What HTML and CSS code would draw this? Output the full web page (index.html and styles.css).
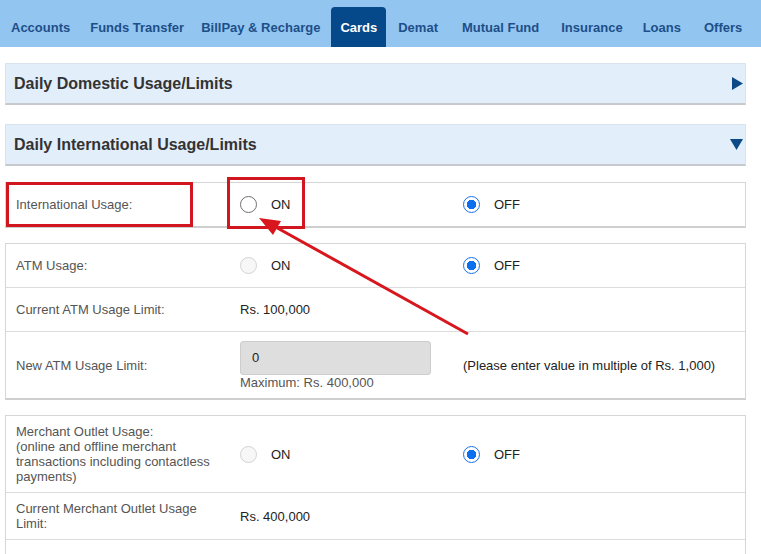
FILE: index.html
```html
<!DOCTYPE html>
<html>
<head>
<meta charset="utf-8">
<link rel="stylesheet" href="styles.css">
</head>
<body>
<nav class="nav">
  <a class="tab">Accounts</a>
  <a class="tab">Funds Transfer</a>
  <a class="tab">BillPay &amp; Recharge</a>
  <a class="tab active">Cards</a>
  <a class="tab">Demat</a>
  <a class="tab">Mutual Fund</a>
  <a class="tab">Insurance</a>
  <a class="tab">Loans</a>
  <a class="tab">Offers</a>
</nav>
<main class="content">
  <div class="panel">
    <span class="panel-title">Daily Domestic Usage/Limits</span>
    <svg class="caret" width="11" height="13" viewBox="0 0 11 13"><polygon points="0,0 11,6.5 0,13" fill="#0b4a86"/></svg>
  </div>
  <div class="panel">
    <span class="panel-title">Daily International Usage/Limits</span>
    <svg class="caret" width="13" height="11" viewBox="0 0 13 11"><polygon points="0,0 13,0 6.5,11" fill="#0b4a86"/></svg>
  </div>

  <div class="box">
    <div class="row">
      <div class="label">International Usage:</div>
      <div class="opt"><span class="radio"></span>ON</div>
      <div class="opt"><span class="radio checked"></span>OFF</div>
    </div>
  </div>

  <div class="box">
    <div class="row">
      <div class="label">ATM Usage:</div>
      <div class="opt"><span class="radio disabled"></span>ON</div>
      <div class="opt"><span class="radio checked"></span>OFF</div>
    </div>
    <div class="row">
      <div class="label">Current ATM Usage Limit:</div>
      <div class="value">Rs. 100,000</div>
      <div></div>
    </div>
    <div class="row tall">
      <div class="label">New ATM Usage Limit:</div>
      <div class="field">
        <div class="input">0</div>
        <div class="max">Maximum: Rs. 400,000</div>
      </div>
      <div class="hint">(Please enter value in multiple of Rs. 1,000)</div>
    </div>
  </div>

  <div class="box">
    <div class="row merchant">
      <div class="label">Merchant Outlet Usage:<br>(online and offline merchant transactions including contactless payments)</div>
      <div class="opt"><span class="radio disabled"></span>ON</div>
      <div class="opt"><span class="radio checked"></span>OFF</div>
    </div>
    <div class="row two">
      <div class="label">Current Merchant Outlet Usage Limit:</div>
      <div class="value">Rs. 400,000</div>
      <div></div>
    </div>
    <div class="row tall">
      <div class="label"></div>
      <div class="field">
        <div class="input"></div>
      </div>
      <div></div>
    </div>
  </div>
</main>

<div class="mark mark-label"></div>
<div class="mark mark-on"></div>
<svg class="arrow" width="761" height="554" viewBox="0 0 761 554">
  <line x1="468" y1="334" x2="272" y2="225" stroke="#d8161e" stroke-width="3"/>
  <polygon points="259,218 281,221 273,235" fill="#d8161e"/>
</svg>
</body>
</html>
```

FILE: styles.css
```css
* { box-sizing: border-box; }
html, body { margin: 0; padding: 0; background: #fff; }
body {
  font-family: "Liberation Sans", Arial, sans-serif;
  font-size: 13px;
  color: #222;
  width: 761px;
  height: 554px;
  overflow: hidden;
  position: relative;
}
.nav {
  display: flex;
  align-items: flex-end;
  height: 47px;
  background: #93c5f1;
  padding-left: 1px;
}
.tab {
  display: block;
  height: 40px;
  line-height: 41px;
  padding: 0 10px;
  font-weight: bold;
  font-size: 13px;
  color: #1d4f88;
  white-space: nowrap;
}
.tab:nth-child(2) { padding-right: 7px; }
.tab:nth-child(3) { padding-right: 11px; }
.tab:nth-child(5) { padding-left: 12px; padding-right: 14px; }
.tab:nth-child(6) { padding-right: 12px; }
.tab:nth-child(8) { padding-right: 13px; }
.tab.active {
  background: #05498a;
  color: #fff;
  border-radius: 4px 4px 0 0;
  padding: 0 9px;
}
.content {
  margin-left: 5px;
  width: 741px;
  padding-top: 16px;
}
.panel {
  display: flex;
  align-items: center;
  justify-content: space-between;
  height: 42px;
  background: #e2eefa;
  border: 1px solid #d9e3ed;
  border-bottom: 2px solid #c6cace;
  padding: 0 2px 0 8px;
  margin-bottom: 19px;
}
.panel + .panel { margin-bottom: 16px; }
.panel-title {
  font-weight: bold;
  font-size: 16px;
  color: #333;
}
.box {
  border: 1px solid #d6d6d6;
  border-bottom: 2px solid #cfcfcf;
  margin-bottom: 15px;
}
.row {
  display: grid;
  grid-template-columns: 224px 223px 1fr;
  align-items: center;
  min-height: 44px;
  padding-left: 10px;
  border-top: 1px solid #dcdcdc;
}
.row:first-child { border-top: none; min-height: 43px; }
.label {
  color: #555;
  padding-right: 10px;
  line-height: 15px;
}
.opt {
  display: flex;
  align-items: center;
  color: #222;
}
.value { color: #222; }
.radio {
  width: 17px;
  height: 17px;
  border-radius: 50%;
  border: 1.5px solid #6f6f6f;
  background: #fff;
  margin-right: 14px;
  flex: none;
}
.radio.disabled {
  border-color: #d3d3d3;
  background: #f7f7f7;
}
.radio.checked {
  border: 1.5px solid #1a73e8;
  background: radial-gradient(circle, #0b6ff0 0 4.5px, #fff 5px);
}
.row.tall { min-height: 66px; }
.field { padding: 9px 0 8px; }
.input {
  width: 191px;
  height: 34px;
  background: #dedede;
  border: 1px solid #cdcdcd;
  border-radius: 3px;
  line-height: 32px;
  padding-left: 11px;
}
.max {
  color: #555;
  line-height: 15px;
}
.hint { color: #222; }
.row.merchant { min-height: 76px; padding-top: 8px; padding-bottom: 8px; }
.row.two { min-height: 47px; }

.mark {
  position: absolute;
  border: 3px solid #d2161f;
}
.mark-label { left: 6px; top: 182px; width: 187px; height: 45px; }
.mark-on { left: 227px; top: 177px; width: 78px; height: 52px; }
.arrow { position: absolute; left: 0; top: 0; pointer-events: none; }
```
